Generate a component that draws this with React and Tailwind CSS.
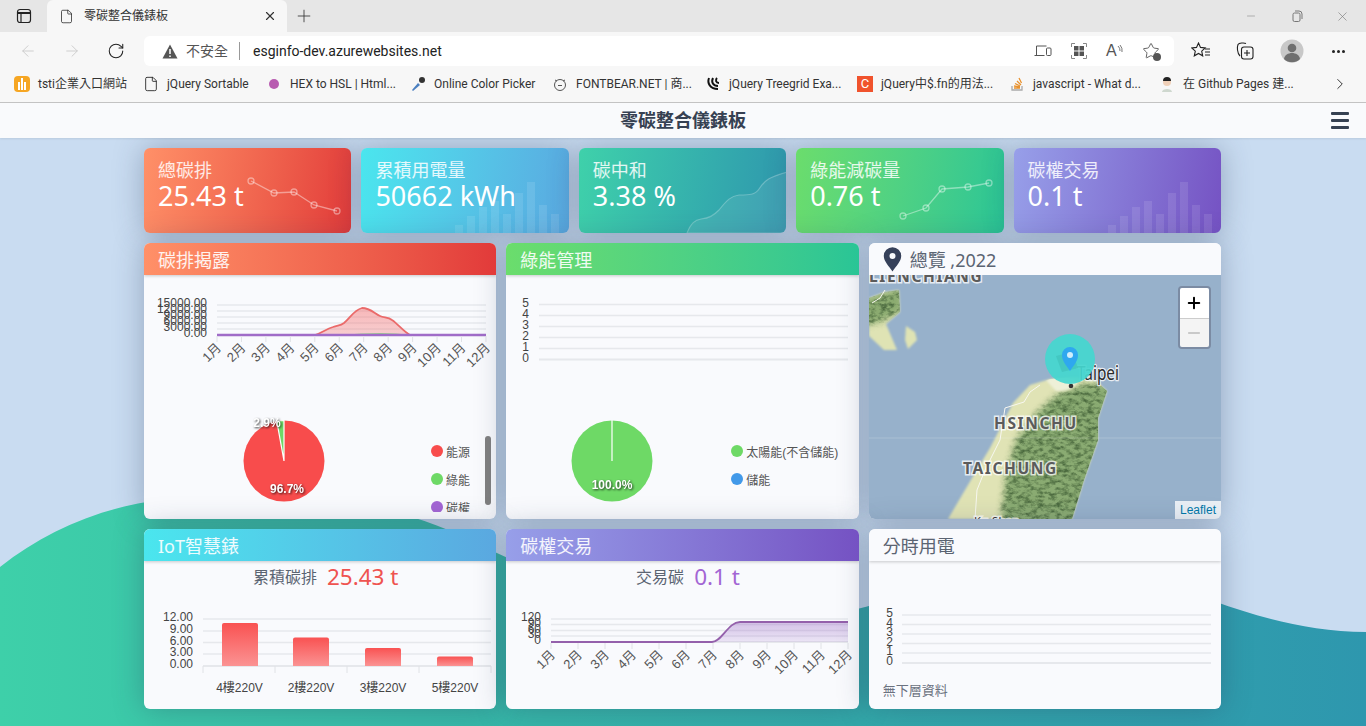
import React from 'react';
import { ArrowLeft, ArrowRight, RotateCw, Plus, X, Minus, ChevronRight, Star, File } from 'lucide-react';

const months = ['1月', '2月', '3月', '4月', '5月', '6月', '7月', '8月', '9月', '10月', '11月', '12月'];
const barHeights = [8, 17, 26, 32, 19, 40, 51, 28, 19];

const chartFont = "font-['Liberation_Sans','Noto_Sans_CJK_TC',sans-serif]";

const bookmarks = [
  { label: 'tsti企業入口網站', w: 'w-[129px]', icon: <div className="w-4 h-4 bg-[#f6a623] rounded-sm flex items-end justify-center gap-px pb-0.5"><span className="w-0.5 h-2 bg-white" /><span className="w-0.5 h-3 bg-white" /><span className="w-0.5 h-2 bg-white" /></div> },
  { label: 'jQuery Sortable', w: 'w-[123px]', icon: <File className="w-4 h-4 text-[#222]" strokeWidth={1.3} /> },
  { label: 'HEX to HSL | Html...', w: 'w-[144px]', icon: <span className="w-4 h-4 flex items-center justify-center"><span className="w-2.5 h-2.5 rounded-full bg-[#b85bb0]" /></span> },
  { label: 'Online Color Picker', w: 'w-[142px]', icon: <svg width="16" height="16" viewBox="0 0 16 16"><path d="M2 14 L8 7 L10 9 L3 15Z" fill="#4a7fc0" /><circle cx="12" cy="4" r="3" fill="#333" /></svg> },
  { label: 'FONTBEAR.NET | 商...', w: 'w-[153px]', icon: <svg width="16" height="16" viewBox="0 0 16 16" fill="none" stroke="#555"><circle cx="8" cy="9" r="5.5" /><path d="M3 4l2 1M13 4l-2 1M6 9.500h4" /></svg> },
  { label: 'jQuery Treegrid Exa...', w: 'w-[152px]', icon: <svg width="16" height="16" viewBox="0 0 16 16" fill="none" stroke="#111" strokeWidth="2"><path d="M4 2C2 7 5 13 13 13M8 2C6 6 8 10 13 10M12 2C10 4 11 7 14 7" /></svg> },
  { label: 'jQuery中$.fn的用法...', w: 'w-[152px]', icon: <div className="w-4 h-4 bg-[#f0532d] text-white text-[13px] leading-4 text-center">C</div> },
  { label: 'javascript - What d...', w: 'w-[150px]', icon: <svg width="16" height="16" viewBox="0 0 16 16" fill="none" stroke="#e8912d" strokeWidth="1.3"><path d="M3 10v4h10v-4" stroke="#aaa" /><path d="M5 12h6M5 10l6 1M6 7.500l5 2.500M8 5l4 4M10 2l2.500 5" /></svg> },
  { label: '在 Github Pages 建...', w: 'w-[172px]', icon: <svg width="16" height="16" viewBox="0 0 16 16"><circle cx="8" cy="6" r="4" fill="#f0d0b8" /><path d="M4 5a4 4 0 0 1 8 0z" fill="#222" /><path d="M3 16c0-4 10-4 10 0z" fill="#cfd8cf" /></svg> },
];

const BarsDecor = () => (
  <div className="absolute bottom-0 left-[94px] flex items-end gap-1">
    {barHeights.map((h, i) => (
      <span key={i} className="w-2 bg-white/10" style={{ height: h }} />
    ))}
  </div>
);

const LineDecor = ({ points }) => (
  <svg className="absolute inset-0 w-full h-full" fill="none" stroke="rgba(255,255,255,0.42)" strokeWidth="1.3">
    <polyline points={points.map((p) => p.join(',')).join(' ')} />
    {points.map((p, i) => (
      <circle key={i} cx={p[0]} cy={p[1]} r="3" />
    ))}
  </svg>
);

const AreaDecor = () => (
  <svg className="absolute inset-0 w-full h-full" fill="none">
    <path d="M108 85 C112 75 116 72 122 71 C130 70 134 68 140 62 C148 52 152 48 160 47 C170 47 176 47 180 41 C186 32 190 29 208 24 L208 85Z" fill="rgba(255,255,255,0.08)" stroke="rgba(255,255,255,0.25)" strokeWidth="1.2" />
  </svg>
);

const stats = [
  { title: '總碳排', value: '25.43 t', bg: 'from-[#ff9068] to-[#e23a3a]', decor: <LineDecor points={[[107, 33], [130, 45], [150, 44], [170, 57], [193, 63]]} /> },
  { title: '累積用電量', value: '50662 kWh', bg: 'from-[#4ae6ee] to-[#5aa8e0]', decor: <BarsDecor /> },
  { title: '碳中和', value: '3.38 %', bg: 'from-[#3fd1aa] to-[#2f96ad]', decor: <AreaDecor /> },
  { title: '綠能減碳量', value: '0.76 t', bg: 'from-[#6bdd6c] to-[#29c596]', decor: <LineDecor points={[[107, 68], [130, 60], [146, 41], [172, 39], [193, 35]]} /> },
  { title: '碳權交易', value: '0.1 t', bg: 'from-[#979fe9] to-[#7552c3]', decor: <BarsDecor /> },
];

const StatCard = ({ title, value, bg, decor }) => (
  <div className={`relative h-[85px] rounded-md overflow-hidden bg-linear-100 ${bg} px-3.5 pt-[9px] text-white shadow-[0_0_30px_rgba(40,60,90,0.34)]`}>
    {decor}
    <div className="relative text-[18px] leading-[26px] text-white/85">{title}</div>
    <div className="relative text-[27px] leading-[34px] -mt-[4px]">{value}</div>
  </div>
);

const Card = ({ title, bg, dark, icon, children, className }) => (
  <div className={`relative rounded-md overflow-hidden bg-[#f9fafd] shadow-[0_0_30px_rgba(40,60,90,0.34)] ${className}`}>
    <div className={`relative z-10 h-8 flex items-center px-3.5 pt-[3px] text-[18px] shadow-[0_1px_3px_rgba(0,0,0,0.2)] ${bg ? `bg-linear-to-r ${bg} text-white/90` : 'bg-[#f9fafd] text-[#5b6472]'} ${dark ? 'shadow-none' : ''}`}>
      {icon}
      {title}
    </div>
    {children}
  </div>
);

const Grid = ({ ys, x1, x2, labels, labelX }) => (
  <g className={chartFont}>
    {ys.map((y, i) => (
      <line key={i} x1={x1} x2={x2} y1={y} y2={y} stroke="#e6e8ec" strokeWidth={i === ys.length - 1 ? 2 : 1.5} />
    ))}
    {labels.map((l, i) => (
      <text key={l} x={labelX} y={ys[i] + 2} textAnchor="end" fontSize="12" fill="#444">{l}</text>
    ))}
  </g>
);

const MonthAxis = ({ x0, step, y, dx = 5, dy = 12.5 }) => (
  <g className={chartFont}>
    {months.map((m, i) => {
      const x = x0 + i * step;
      return (
        <g key={m}>
          <line x1={x} x2={x} y1={y} y2={y + 6} stroke="#e0e2e6" />
          <text x={x + dx} y={y + dy} textAnchor="end" fontSize="13" fill="#555" transform={`rotate(-45 ${x + dx} ${y + dy})`}>{m}</text>
        </g>
      );
    })}
  </g>
);

const Legend = ({ items }) => (
  <div className="flex flex-col">
    {items.map((it) => (
      <div key={it.label} className={`h-7 flex items-center gap-[3px] text-[12px] text-[#555] shrink-0 ${chartFont}`}>
        <span className={`w-3 h-3 rounded-full ${it.color}`} />
        <span className="pt-[3px]">{it.label}</span>
      </div>
    ))}
  </div>
);

const pieLabel = "font-['Liberation_Sans',sans-serif] font-bold [filter:drop-shadow(1px_1px_1px_rgba(0,0,0,0.75))]";

const landPath = 'M948 519 L975 473 L990 448 L1013 403 L1030 385 L1050 379 L1075 377 L1095 380 L1107 391 L1098 418 L1098 440 L1084 480 L1072 519Z';
const islandPath = 'M869 298 L885 292 L899 290 L900 312 L886 324 L897 350 L884 350 L869 336Z';

const MapView = () => (
  <svg viewBox="869 275 352 244" className="block w-[352px] h-[244px]">
    <defs>
      <filter id="soft"><feGaussianBlur stdDeviation="1" /></filter>
      <filter id="mountain" x="-15%" y="-15%" width="130%" height="130%" colorInterpolationFilters="sRGB">
        <feTurbulence type="fractalNoise" baseFrequency="0.16 0.26" numOctaves="4" seed="7" result="n" />
        <feColorMatrix in="n" type="matrix" values="0 0 0 0 0.3  0 0 0 0 0.42  0 0 0 0 0.25  2.6 0 0 0 -1.05" result="dark" />
        <feGaussianBlur in="dark" stdDeviation="0.6" result="darkSoft" />
        <feGaussianBlur in="SourceGraphic" stdDeviation="3" result="base" />
        <feComposite in="darkSoft" in2="base" operator="in" result="tex" />
        <feMerge>
          <feMergeNode in="base" />
          <feMergeNode in="tex" />
        </feMerge>
      </filter>
      <clipPath id="land"><path d={landPath} /></clipPath>
      <clipPath id="island"><path d={islandPath} /></clipPath>
    </defs>
    <rect x="869" y="275" width="352" height="244" fill="#97b1cb" />
    <g filter="url(#soft)">
      <path d={islandPath} fill="#dfe3b4" />
      <path d="M906 326 L915 332 L917 340 L908 349 L905 340Z" fill="#dfe3b4" />
      <path d={landPath} fill="#e0e3b5" />
    </g>
    <g clipPath="url(#island)">
      <path d="M860 300 L900 288 L904 310 L880 322 L860 326Z" fill="#8bab70" filter="url(#mountain)" />
    </g>
    <g clipPath="url(#land)">
      <path d="M1000 530 L1006 475 L1016 440 L1038 412 L1058 394 L1085 384 L1120 385 L1110 530Z" fill="#8aab72" filter="url(#mountain)" />
      <path d="M1046 380 Q1062 372 1078 382 Q1072 392 1056 391Z" fill="#eef0d8" filter="url(#soft)" />
    </g>
    <path d="M1040 385 L1030 392 L1024 402 L1005 408 L1000 440 L985 470 L977 490 L975 519" fill="none" stroke="#f7f7f0" strokeWidth="1" />
    <path d="M885 290 L880 298 L872 303" fill="none" stroke="#f7f7f0" strokeWidth="1" />
    <line x1="869" x2="1221" y1="438" y2="438" stroke="#fff" strokeOpacity="0.18" />
    <g className="font-['Noto_Sans',sans-serif] font-bold [paint-order:stroke]" fill="#5b5b5b" stroke="#fff" strokeOpacity="0.75" strokeWidth="3" fontSize="15.5" letterSpacing="1.6">
      <text x="869" y="282">LIENCHIANG</text>
      <text x="994" y="429">HSINCHU</text>
      <text x="963" y="474">TAICHUNG</text>
      <text x="974" y="525" fontSize="11" fontWeight="400" letterSpacing="0.5" fill="#333">Ku Shan</text>
    </g>
    <text x="1077" y="380" textLength="42" lengthAdjust="spacingAndGlyphs" className="font-['Noto_Sans',sans-serif] [paint-order:stroke]" fontSize="19" fill="#2b2b2b" stroke="#fff" strokeOpacity="0.8" strokeWidth="2.5">Taipei</text>
    <circle cx="1071" cy="386" r="2.3" fill="#333" />
    <circle cx="1070" cy="359" r="25" fill="#45d6cf" fillOpacity="0.93" />
    <path d="M1056 356 L1072 352 L1078 368 L1062 372Z" fill="#3bbbb6" fillOpacity="0.5" />
    <path d="M1070 371 C1066 365 1062 361 1062 355 A8 8 0 0 1 1078 355 C1078 361 1074 365 1070 371Z" fill="#2ea8ef" />
    <circle cx="1070" cy="355" r="3" fill="#cfeefc" />
  </svg>
);

export default function App() {
  return (
    <div className="relative w-[1366px] h-[726px] overflow-hidden flex flex-col bg-[#c9dcf1] font-['Noto_Sans','Noto_Sans_CJK_TC',sans-serif]">
      {/* browser tab strip */}
      <div className="h-8 shrink-0 bg-[#e6e6e6] flex items-end text-[#333]">
        <div className="w-[47px] h-8 flex items-center justify-center">
          <svg width="16" height="16" viewBox="0 0 16 16" fill="none" stroke="#222" strokeWidth="1.2"><rect x="1.5" y="1.5" width="13" height="13" rx="2.5" /><path d="M1.5 5h13" strokeWidth="2" /><path d="M5 5v9" /></svg>
        </div>
        <div className="w-[240px] h-8 bg-[#f7f7f7] rounded-t-md flex items-center pl-3 pr-2.5">
          <File className="w-[15px] h-[17px] text-[#222]" strokeWidth={1.2} />
          <span className="ml-[10px] text-[12px] flex-1">零碳整合儀錶板</span>
          <X className="w-3.5 h-3.5" />
        </div>
        <div className="w-[34px] h-8 flex items-center justify-center">
          <Plus className="w-5 h-5" strokeWidth={1} />
        </div>
        <div className="flex-1 h-8 flex items-center justify-end text-[#777]">
          <Minus className="w-3 h-3" strokeWidth={1} />
          <div className="w-[46px] flex justify-center ml-[17px] mr-[15px]">
            <svg width="11" height="12" viewBox="0 0 11 12" fill="none" stroke="#777"><rect x="1" y="3" width="7" height="8.500" rx="1.500" /><path d="M3 1h4a3 3 0 0 1 3 3v5" /></svg>
          </div>
          <X className="w-[15px] h-[15px] mr-4" strokeWidth={1} />
        </div>
      </div>

      {/* toolbar */}
      <div className="h-[38px] shrink-0 bg-[#f7f7f7] flex items-center relative">
        <div className="w-[144px] flex items-center pl-[19px] gap-[26px]">
          <ArrowLeft className="w-[18px] h-[18px] text-[#c9c9c9]" strokeWidth={1.2} />
          <ArrowRight className="w-[18px] h-[18px] text-[#c9c9c9]" strokeWidth={1.2} />
          <RotateCw className="w-[18px] h-[18px] text-[#222]" strokeWidth={1.4} />
        </div>
        <div className="w-[1030px] h-[30px] bg-white rounded-md flex items-center pl-[18px] text-[14px] font-['Roboto','Noto_Sans_CJK_TC',sans-serif]">
          <svg width="16" height="15" viewBox="0 0 16 15"><path d="M8 0.500 L15.500 14.500 H0.500Z" fill="#555" /><path d="M8 5v5M8 11.500v1.500" stroke="#fff" strokeWidth="1.500" /></svg>
          <span className="ml-2 text-[#555]">不安全</span>
          <span className="ml-[11px] w-px h-[18px] bg-[#999]" />
          <span className="ml-[13px] text-[#222]">esginfo-dev.azurewebsites.net</span>
          <div className="ml-auto flex items-center gap-[18px] pr-[14px] text-[#666]">
            <svg width="18" height="16" viewBox="0 0 18 16" fill="none" stroke="#555"><path d="M2.500 12V3h10M0.500 12.500h10" /><rect x="12.500" y="5" width="4.500" height="7.500" rx="1" /></svg>
            <svg width="18" height="18" viewBox="0 0 18 18" fill="#555"><rect x="4" y="4" width="4.500" height="4.500" /><rect x="9.500" y="4" width="4.500" height="4.500" /><rect x="4" y="9.500" width="4.500" height="4.500" /><rect x="9.500" y="9.500" width="4.500" height="4.500" /><path d="M1.500 5V1.500H5M13 1.500h3.500V5M16.500 13v3.500H13M5 16.500H1.500V13" fill="none" stroke="#888" /></svg>
            <span className="w-[18px] flex items-center text-[16px] leading-none text-[#555] font-['Liberation_Sans',sans-serif]">A<svg width="6" height="12" viewBox="0 0 6 12" fill="none" stroke="#777"><path d="M1 1a6 6 0 0 1 2 5M3 0a8 8 0 0 1 2 7" /></svg></span>
            <span className="relative w-[18px] h-[18px]">
              <Star className="w-[18px] h-[18px] text-[#444]" strokeWidth={1.1} />
              <span className="absolute -right-px -bottom-px w-2 h-2 rounded-full bg-[#555]" />
            </span>
          </div>
        </div>
        <div className="flex-1 flex items-center text-[#222]">
          <div className="w-[54px] flex justify-center">
            <svg width="20" height="18" viewBox="0 0 20 18" fill="none" stroke="#222" strokeWidth="1.1"><path d="M7.500 1l2 4.400 4.700.500-3.500 3.200 1 4.700-4.200-2.400-4.200 2.400 1-4.700L0.800 5.900l4.700-.500z" /><path d="M14 7h5M14 10h5M14 13h5" /></svg>
          </div>
          <div className="w-[34px] flex justify-center">
            <svg width="20" height="20" viewBox="0 0 20 20" fill="none" stroke="#222" strokeWidth="1.1"><path d="M5 15C2 12 2 6 3 3.500 4 2 9 1.500 11 2.500" /><rect x="6.500" y="6" width="11.500" height="12" rx="2.500" /><path d="M12 9v6M9 12h6" /></svg>
          </div>
          <div className="w-[60px] flex justify-center">
            <svg width="24" height="24" viewBox="0 0 24 24"><circle cx="12" cy="12" r="11.500" fill="#c8c8c8" /><circle cx="12" cy="9" r="4.300" fill="#6f6f6f" /><path d="M4 20c1-8 15-8 16 0a11.500 11.500 0 0 1-16 0z" fill="#6f6f6f" /></svg>
          </div>
          <div className="w-[32px] flex justify-center gap-[2px]">
            <span className="w-[3px] h-[3px] rounded-full bg-[#222]" /><span className="w-[3px] h-[3px] rounded-full bg-[#222]" /><span className="w-[3px] h-[3px] rounded-full bg-[#222]" />
          </div>
        </div>
      </div>

      {/* bookmarks */}
      <div className="h-[33px] shrink-0 bg-[#f7f7f7] border-b border-[#c4c4c4] flex items-center pl-[14px] pb-[5px] text-[12px] text-[#333] font-['Roboto','Noto_Sans_CJK_TC',sans-serif]">
        {bookmarks.map((b) => (
          <div key={b.label} className={`${b.w} flex items-center gap-2 shrink-0`}>
            {b.icon}
            <span className="whitespace-nowrap">{b.label}</span>
          </div>
        ))}
        <ChevronRight className="w-[18px] h-[18px] text-[#222]" strokeWidth={1.2} />
      </div>

      {/* page */}
      <div className="relative flex-1 flex flex-col">
        <svg className="absolute inset-0 w-full h-full" viewBox="0 103 1366 623" preserveAspectRatio="none">
          <defs>
            <linearGradient id="wave" x1="0" x2="1" y1="0" y2="0">
              <stop offset="0" stopColor="#3ed0a9" />
              <stop offset="0.4" stopColor="#36b6a9" />
              <stop offset="1" stopColor="#2e97ae" />
            </linearGradient>
          </defs>
          <path d="M0 567 C60 520 130 495 230 495 C320 495 400 505 470 540 C560 585 660 622 760 622 C880 622 960 560 1060 560 C1150 560 1240 632 1366 632 L1366 726 L0 726Z" fill="url(#wave)" />
        </svg>

        <div className="relative z-10 h-[35px] shrink-0 bg-[#f9fafc] flex items-center justify-center shadow-[0_1px_2px_rgba(0,0,0,0.08)]">
          <span className="text-[18px] font-bold text-[#364152]">零碳整合儀錶板</span>
          <svg className="absolute right-[17px] top-[9px]" width="18" height="17" viewBox="0 0 18 17" fill="#364152"><rect y="0" width="18" height="3" rx="1" /><rect y="7" width="18" height="3" rx="1" /><rect y="14" width="18" height="3" rx="1" /></svg>
        </div>

        <div className="relative ml-[144px] w-[1077px] pt-[10px] flex flex-col gap-[10px]">
          <div className="grid grid-cols-5 gap-[10px]">
            {stats.map((s) => (
              <StatCard key={s.title} {...s} />
            ))}
          </div>

          <div className="grid grid-cols-3 gap-[10px] h-[276px]">
            <Card title="碳排揭露" bg="from-[#ff9068] to-[#e23a3a]">
              <svg viewBox="144 275 352 125" className="block w-[352px] h-[125px]">
                <defs>
                  <linearGradient id="redArea" x1="0" x2="0" y1="0" y2="1">
                    <stop offset="0" stopColor="#f56565" stopOpacity="0.45" />
                    <stop offset="1" stopColor="#f56565" stopOpacity="0.3" />
                  </linearGradient>
                </defs>
                <Grid ys={[305, 311, 317, 323, 329, 335]} x1={217} x2={486} labels={['15000.00', '12000.00', '9000.00', '6000.00', '3000.00', '0.00']} labelX={207} />
                <path d="M315 335 C322 333 326 329 333 327 C338 325 340 326 344 323 C350 318 354 310 362 308 C370 308 374 313 380 316 C384 318 388 317 392 320 C398 324 404 332 410 335Z" fill="url(#redArea)" stroke="#ea6a6a" strokeWidth="1.8" />
                <path d="M340 335 Q385 331 410 335Z" fill="#6dd66a" fillOpacity="0.7" />
                <line x1="217" x2="486" y1="335" y2="335" stroke="#a06cc8" strokeWidth="2.5" />
                <MonthAxis x0={217} step={24.45} y={336} />
              </svg>
              <div className="flex">
                <svg viewBox="144 400 287 119" className="block w-[287px] h-[119px] shrink-0">
                  <circle cx="284" cy="461" r="40.5" fill="#f84c4c" />
                  <path d="M284 461 L276.8 421.2 A40.5 40.5 0 0 1 284 420.5Z" fill="#6ed966" stroke="#fff" strokeWidth="1.2" />
                  <text x="267" y="427" textAnchor="middle" fontSize="12" fill="#fff" className={pieLabel}>2.9%</text>
                  <text x="287" y="493" textAnchor="middle" fontSize="12" fill="#fff" className={pieLabel}>96.7%</text>
                </svg>
                <div className="mt-[37px] h-[75px] overflow-hidden">
                  <Legend items={[{ label: '能源', color: 'bg-[#f84c4c]' }, { label: '綠能', color: 'bg-[#6ed966]' }, { label: '碳權', color: 'bg-[#a365d4]' }]} />
                </div>
              </div>
              <div className="absolute left-[341px] top-[193px] w-1.5 h-[69px] rounded-full bg-[#808080]" />
            </Card>

            <Card title="綠能管理" bg="from-[#6bdd6c] to-[#29c596]">
              <svg viewBox="506 275 353 125" className="block w-[353px] h-[125px]">
                <Grid ys={[304.5, 315.5, 326.5, 337.5, 348.5, 359.5]} x1={539} x2={848} labels={['5', '4', '3', '2', '1', '0']} labelX={529} />
              </svg>
              <div className="flex">
                <svg viewBox="506 400 225 119" className="block w-[225px] h-[119px] shrink-0">
                  <circle cx="612" cy="461" r="40.5" fill="#6ed966" />
                  <line x1="612" x2="612" y1="420" y2="461" stroke="#fff" strokeWidth="1.2" />
                  <text x="612" y="489" textAnchor="middle" fontSize="12" fill="#fff" className={pieLabel}>100.0%</text>
                </svg>
                <div className="mt-[37px]">
                  <Legend items={[{ label: '太陽能(不含儲能)', color: 'bg-[#6ed966]' }, { label: '儲能', color: 'bg-[#4299e9]' }]} />
                </div>
              </div>
            </Card>

            <Card
              title="總覽 ,2022"
              dark
              icon={<svg className="mr-2 shrink-0 -mt-[3px]" width="19" height="25" viewBox="0 0 19 25"><path fillRule="evenodd" d="M9.500 24.500C6 19 .8 14.500.8 9a8.700 8.700 0 0 1 17.400 0c0 5.500-5.200 10-8.700 15.500zM9.500 6a3 3 0 1 0 0 6 3 3 0 0 0 0-6z" fill="#36415a" /></svg>}
            >
              <MapView />
              <div className="absolute left-[309px] top-[43px] w-[33px] h-[63px] rounded-sm border-2 border-[#7b8ba3] overflow-hidden flex flex-col font-['Liberation_Sans',sans-serif]">
                <div className="h-[31px] bg-white border-b border-[#ccc] flex items-center justify-center"><Plus className="w-[18px] h-[18px] text-black" strokeWidth={2.6} /></div>
                <div className="flex-1 bg-[#f4f4f4] flex items-center justify-center"><Minus className="w-[18px] h-[18px] text-[#bbb]" strokeWidth={2.2} /></div>
              </div>
              <div className="absolute right-0 bottom-0 h-[18px] px-[5px] bg-white/80 text-[12px] leading-[18px] text-[#0078a8] font-['Liberation_Sans',sans-serif]">Leaflet</div>
            </Card>
          </div>

          <div className="grid grid-cols-3 gap-[10px] h-[180px]">
            <Card title="IoT智慧錶" bg="from-[#4ae6ee] to-[#5aa8e0]">
              <div className="flex items-center justify-center gap-[10px] h-8 pl-[11px] text-[#5b6472]">
                <span className="text-[16px]">累積碳排</span>
                <span className="text-[22.5px] text-[#ef5350]">25.43 t</span>
              </div>
              <svg viewBox="144 593 352 116" className="block w-[352px] h-[116px]">
                <defs>
                  <linearGradient id="barRed" x1="0" x2="0" y1="0" y2="1">
                    <stop offset="0" stopColor="#f95252" />
                    <stop offset="1" stopColor="#fb9393" />
                  </linearGradient>
                </defs>
                <Grid ys={[619, 631, 642.5, 654, 666]} x1={203} x2={491} labels={['12.00', '9.00', '6.00', '3.00', '0.00']} labelX={193} />
                {[[222, 623], [293, 637.5], [365, 648], [437, 656.5]].map(([x, y]) => (
                  <path key={x} d={`M${x} 666 V${y + 2} Q${x} ${y} ${x + 2} ${y} H${x + 34} Q${x + 36} ${y} ${x + 36} ${y + 2} V666Z`} fill="url(#barRed)" />
                ))}
                <g className={chartFont}>
                  {[203, 275, 347, 419, 491].map((x) => (
                    <line key={x} x1={x} x2={x} y1={666} y2={673} stroke="#e0e2e6" />
                  ))}
                  {[['4樓220V', 239.5], ['2樓220V', 311], ['3樓220V', 383], ['5樓220V', 455]].map(([t, x]) => (
                    <text key={t} x={x} y={692} textAnchor="middle" fontSize="12" fill="#444">{t}</text>
                  ))}
                </g>
              </svg>
            </Card>

            <Card title="碳權交易" bg="from-[#979fe9] to-[#7552c3]">
              <div className="flex items-center justify-center gap-[10px] h-8 pl-[11px] text-[#5b6472]">
                <span className="text-[16px]">交易碳</span>
                <span className="text-[22.5px] text-[#a365d4]">0.1 t</span>
              </div>
              <svg viewBox="506 593 353 116" className="block w-[353px] h-[116px]">
                <defs>
                  <linearGradient id="purpleArea" x1="0" x2="0" y1="0" y2="1">
                    <stop offset="0" stopColor="#9c6cc8" stopOpacity="0.4" />
                    <stop offset="1" stopColor="#9c6cc8" stopOpacity="0.15" />
                  </linearGradient>
                </defs>
                <Grid ys={[619, 624.5, 630.5, 636, 642]} x1={551} x2={848} labels={['120', '90', '60', '30', '0']} labelX={541} />
                <path d="M551 642 H712 C722 642 728 622 740 622 H848 V642Z" fill="url(#purpleArea)" />
                <path d="M551 642 H712 C722 642 728 622 740 622 H848" fill="none" stroke="#9460ab" strokeWidth="1.8" />
                <MonthAxis x0={551} step={27} y={643} />
              </svg>
            </Card>

            <Card title="分時用電">
              <svg viewBox="869 561 352 120" className="block w-[352px] h-[120px]">
                <Grid ys={[615, 624.5, 634, 643.5, 653, 663]} x1={902} x2={1211} labels={['5', '4', '3', '2', '1', '0']} labelX={893} />
              </svg>
              <div className="px-3.5 text-[13px] text-[#6b7280]">無下層資料</div>
            </Card>
          </div>
        </div>
      </div>
    </div>
  );
}
